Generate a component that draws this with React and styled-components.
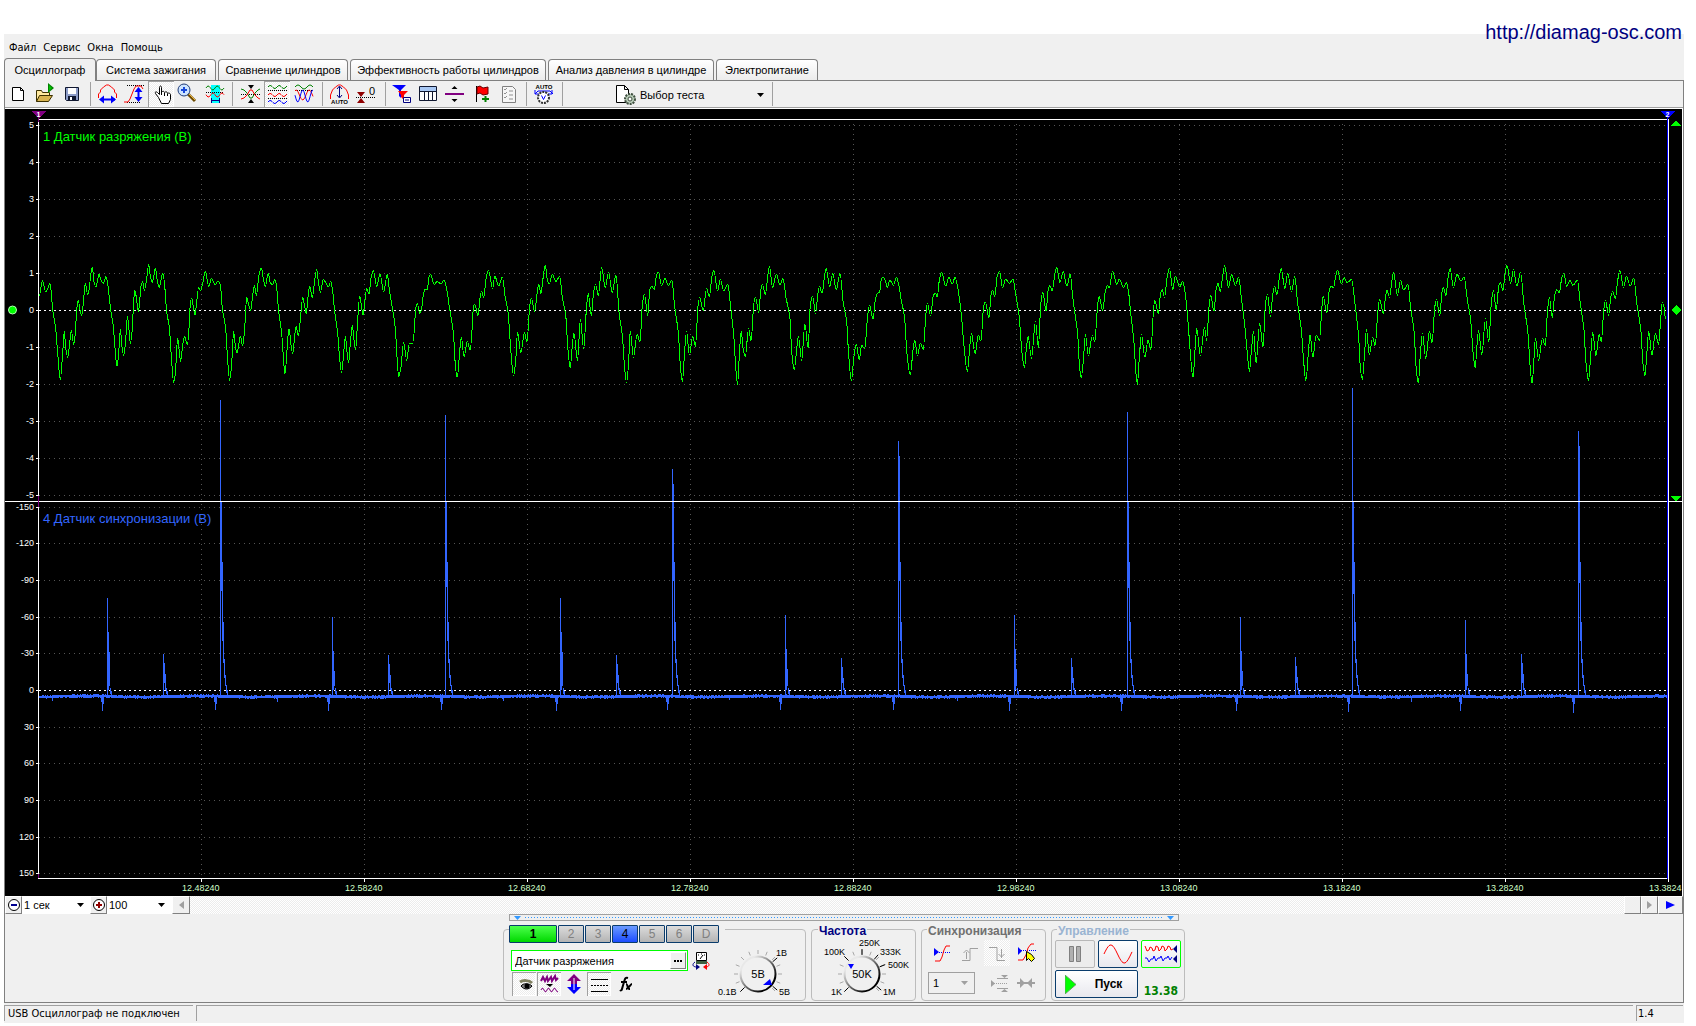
import React from "react";
import styled, { createGlobalStyle, css } from "styled-components";

const ui = '"Liberation Sans", Arial, sans-serif';
const tahoma = '"DejaVu Sans Condensed", "Noto Sans", sans-serif';
const face = "#f0f0f0";
const dither = "repeating-conic-gradient(#ffffff 0 25%, #ececec 0 50%) 0 0 / 2px 2px";

const GlobalStyle = createGlobalStyle`
  *, *::before, *::after { box-sizing: border-box; }
  body { margin: 0; background: #ffffff; font-family: ${ui}; font-size: 12px; color: #000; }
  button, input, select { font: inherit; color: inherit; margin: 0; padding: 0; border: 0; border-radius: 0; background: none; }
  svg { display: block; }
`;

/* ---------- frame ---------- */

const Page = styled.div`
  position: relative;
  padding: 34px 12px 5px 4px;
`;
const SiteLink = styled.a`
  position: absolute;
  top: 20px;
  right: 14px;
  font-size: 20px;
  line-height: 24px;
  color: #000080;
  text-decoration: none;
`;
const Window = styled.div`
  display: flex;
  flex-direction: column;
  background: ${face};
`;
const MenuBar = styled.nav`
  display: flex;
  height: 24px;
  padding: 4px 0 0 5px;
  gap: 7px;
  font-family: ${tahoma};
  font-size: 11px;
  line-height: 18px;
`;
const MenuItem = styled.button`
  line-height: 18px;
`;
const TabStrip = styled.div`
  display: flex;
  align-items: flex-end;
  gap: 2px;
  height: 23px;
  border-bottom: 1px solid #808080;
`;
const Tab = styled.button`
  height: ${(p) => (p.$active ? 23 : 21)}px;
  margin-bottom: ${(p) => (p.$active ? -1 : 0)}px;
  margin-right: ${(p) => (p.$active ? -2 : 0)}px;
  width: ${(p) => p.$w}px;
  border: 1px solid #808080;
  border-bottom: 0;
  border-radius: 4px 4px 0 0;
  background: ${(p) => (p.$active ? face : "linear-gradient(#ffffff, #ececec)")};
  font-size: 11px;
  line-height: 18px;
  white-space: nowrap;
`;
const Workspace = styled.main`
  display: flex;
  flex-direction: column;
  border: 1px solid #808080;
  border-top: 0;
`;

/* ---------- toolbar ---------- */

const Toolbar = styled.div`
  display: flex;
  height: 28px;
  padding: 0 1px;
  border-bottom: 1px solid #ffffff;
  box-shadow: inset 0 -1px 0 #a0a0a0;
`;
const ToolButton = styled.button`
  width: 26px;
  height: 26px;
  ${(p) =>
    p.$pressed &&
    css`
      background: ${dither};
      box-shadow: ${p.disabled ? "none" : "inset 1px 1px 0 #a0a0a0, inset -1px -1px 0 #ffffff"};
    `}
`;
const Separator = styled.span`
  width: ${(p) => p.$w}px;
  height: 24px;
  margin-top: 1px;
  background: linear-gradient(#a0a0a0, #a0a0a0) center / 1px 100% no-repeat;
`;
const TestPicker = styled.label`
  display: flex;
  align-items: center;
  width: 158px;
  margin-left: 47px;
`;
const SelectBox = styled.span`
  position: relative;
  display: flex;
  flex: ${(p) => (p.$w ? "none" : 1)};
  width: ${(p) => (p.$w ? p.$w + "px" : "auto")};
  height: ${(p) => p.$h}px;
  background: ${(p) => p.$bg || "transparent"};
  border: ${(p) => (p.$framed ? "1px solid #a0a0a0" : "0")};
  & > svg {
    position: absolute;
    right: ${(p) => p.$arrow}px;
    top: calc(50% - 2px);
    pointer-events: none;
  }
`;
const Select = styled.select`
  appearance: none;
  width: 100%;
  padding-left: ${(p) => p.$pad}px;
  font-size: 11px;
`;

/* ---------- chart ---------- */

const Scope = styled.div`
  background: #000;
  border-right: 1px solid #ffffff;
`;
const ScopeSvg = styled.svg`
  width: 100%;
  height: 787px;
  font-family: ${ui};
`;

/* ---------- scroll row ---------- */

const ScrollRow = styled.div`
  display: flex;
  height: 18px;
  background: ${dither};
`;
const FlatButton = styled.button`
  display: grid;
  place-items: center;
  width: ${(p) => p.$w}px;
  height: 18px;
  background: ${face};
  border: 1px solid;
  border-color: #ffffff #808080 #808080 #ffffff;
`;
const Spacer = styled.span`
  flex: 1;
`;

/* ---------- control panel ---------- */

const ControlPanel = styled.div`
  display: flex;
  flex-direction: column;
  align-items: center;
  padding-bottom: 1px;
`;
const Splitter = styled.div`
  display: flex;
  align-items: center;
  justify-content: space-between;
  width: 670px;
  height: 7px;
  padding: 0 4px;
  border: 1px solid #a0a0a0;
  &::before {
    content: "";
    order: 1;
    flex: 1;
    height: 1px;
    margin: 0 4px;
    background: repeating-linear-gradient(90deg, #3399ff 0 1px, transparent 1px 3px);
  }
  & > :last-child { order: 2; }
`;
const Groups = styled.div`
  display: flex;
  gap: 5px;
  margin-top: 8px;
`;
const Group = styled.section`
  display: flex;
  flex-direction: column;
  width: ${(p) => p.$w}px;
  height: 72px;
  padding: 0 ${(p) => p.$pad}px;
  border: 1px solid #bcbcbc;
  border-radius: 4px;
`;
const GroupTitle = styled.h2`
  align-self: flex-start;
  height: 16px;
  margin: -7px 0 0 ${(p) => p.$inset}px;
  padding: 0 1px;
  background: ${face};
  color: ${(p) => p.$color};
  font-size: 12px;
  font-weight: bold;
  line-height: 16px;
`;
const Channels = styled.div`
  display: flex;
  align-self: flex-start;
  gap: 1px;
  margin-top: -5px;
  padding-right: 6px;
  background: ${face};
`;
const tones = {
  green: "linear-gradient(#4cff4c, #00d800)",
  blue: "linear-gradient(#6a9aff, #1c4cff)",
  gray: "linear-gradient(#dcdcdc, #b4b4b4)",
};
const ChannelButton = styled.button`
  width: ${(p) => (p.$tone === "green" ? 48 : 26)}px;
  height: 18px;
  border: 1px solid #0a3c6c;
  border-radius: 1px;
  background: ${(p) => tones[p.$tone]};
  color: ${(p) => (p.$tone === "gray" ? "#808080" : "#000")};
  font-size: 12px;
  font-weight: ${(p) => (p.$tone === "green" ? "bold" : "normal")};
  line-height: 14px;
`;
const ProbeBody = styled.div`
  display: flex;
  justify-content: space-between;
  padding: 3px 0 0 2px;
`;
const ProbeLeft = styled.div`
  padding-top: 4px;
`;
const FieldRow = styled.div`
  display: flex;
  gap: 4px;
`;
const Field = styled.div`
  display: flex;
  width: 177px;
  height: 21px;
  padding: 1px;
  border: 1px solid #00ff00;
  background: #ffffff;
`;
const TextInput = styled.input`
  flex: 1;
  min-width: 0;
  padding-left: 2px;
  font-size: 11px;
`;
const MoreButton = styled(FlatButton)`
  height: 17px;
`;
const IconRow = styled.div`
  display: flex;
  gap: 1px;
  margin-top: 1px;
  padding-left: 1px;
`;
const SmallTool = styled(ToolButton)`
  width: 24px;
  height: 24px;
`;
const KnobBox = styled.label`
  position: relative;
  font-family: ${ui};
`;
const KnobInput = styled.input`
  position: absolute;
  inset: 0;
  width: 100%;
  height: 100%;
  opacity: 0;
`;
const SyncGrid = styled.div`
  display: grid;
  grid-template-columns: repeat(4, 26px);
  column-gap: 2px;
  row-gap: 4px;
  align-items: center;
  padding: 1px 0 0 4px;
  & > :nth-child(5) { grid-column: span 2; }
`;
const RunGrid = styled.div`
  display: grid;
  grid-template-columns: repeat(3, 40px);
  grid-auto-rows: 28px;
  gap: 2px 3px;
  padding-top: 1px;
`;
const PushButton = styled.button`
  display: flex;
  align-items: center;
  justify-content: center;
  gap: 19px;
  grid-column: span ${(p) => p.$span || 1};
  padding-right: ${(p) => (p.$span ? 6 : 0)}px;
  border: 1px solid ${(p) => p.$edge};
  border-radius: 2px;
  background: ${(p) => (p.disabled ? "#ececec" : "linear-gradient(#ffffff, #e8e8ee)")};
  font-size: 12px;
  font-weight: bold;
`;
const Clock = styled.output`
  align-self: end;
  padding: 0 3px 0 0;
  text-align: right;
  color: #008000;
  font-family: "DejaVu Sans Condensed", sans-serif;
  font-size: 12px;
  font-weight: bold;
  line-height: 14px;
`;

/* ---------- status bar ---------- */

const StatusBar = styled.footer`
  display: flex;
  gap: 3px;
  height: 18px;
  margin-top: 2px;
  padding-right: 1px;
  font-family: ${tahoma};
  font-size: 11px;
  line-height: 16px;
`;
const StatusCell = styled.div`
  flex: ${(p) => (p.$w ? "none" : 1)};
  width: ${(p) => (p.$w ? p.$w + "px" : "auto")};
  height: 16px;
  padding-left: ${(p) => p.$pad || 3}px;
  border-top: 1px solid #a0a0a0;
  border-left: 1px solid #a0a0a0;
  white-space: nowrap;
`;

/* ---------- drawings ---------- */

const wave = (x0, x1, y, amp, period, phase = 0) => {
  let d = "";
  for (let x = x0; x <= x1; x += 1) {
    const v = y - amp * Math.sin(((x - x0) / period) * Math.PI * 2 + phase);
    d += `${x === x0 ? "M" : "L"}${x} ${v.toFixed(1)}`;
  }
  return d;
};

const Pic = ({ w = 26, h = 26, children }) => (
  <svg width={w} height={h} viewBox={`0 0 ${w} ${h}`} fill="none" aria-hidden="true">{children}</svg>
);
const Arrow = ({ color = "#000" }) => (
  <svg width="7" height="4" viewBox="0 0 7 4" aria-hidden="true"><path d="M0 0h7L3.500 4z" fill={color} /></svg>
);
const dots = { stroke: "#000", strokeDasharray: "1 1", shapeRendering: "crispEdges" };

const icons = {
  file: <path d="M6.500 6.500h8l3 3v10h-11zM14.500 6.500v3h3" fill="#fff" stroke="#000" />,
  open: (
    <>
      <path d="M4.500 20.500v-11h5l1 2h7v3" fill="#ffe9a0" stroke="#3c3000" />
      <path d="M4.500 20.500l3-6h13l-4 6z" fill="#d8b450" stroke="#3c3000" />
      <path d="M16 2v10l6-5z" fill="#008000" /><path d="M17 4v6l3-3z" fill="#00c000" />
    </>
  ),
  save: (
    <>
      <path d="M7.500 6.500h13v13h-12l-1-1z" fill="#8c9cc8" stroke="#101830" />
      <path d="M10 7h8v6h-8z" fill="#fff" /><path d="M10 15h8v4h-8z" fill="#101830" /><path d="M12 16h2v3h-2z" fill="#fff" />
    </>
  ),
  width: (
    <>
      <path d="M2.500 17v-4l2-2v-2l3-3 3-2h2l3 2 3 3v2l2 2v4" stroke="#f00" />
      <path d="M5 18.500h14" stroke="#00f" strokeWidth="2" /><path d="M3 18.500l5-4v8zM20 18.500l-5-4v8z" fill="#00f" />
    </>
  ),
  height: (
    <>
      <path d="M5 4.500h17M5 21.500h14" {...dots} />
      <path d="M2 21h4l2-3 2-5 2-5 2-3h5l2 3" stroke="#f00" />
      <path d="M16.500 8v11" stroke="#00f" strokeWidth="2" /><path d="M16.500 6l-4 5h8zM16.500 21l-4-5h8z" fill="#00f" />
    </>
  ),
  hand: (
    <path d="M10.500 16.500l-3-4c-1-2 1-2 2-1l2 2v-7c0-2 2-2 2 0v5c1-2 3-1 3 0 1-1 3-1 3 1 1-1 3 0 3 1v5l-2 4h-7z M13.500 11v3M16.500 12v3M19.500 13v2" fill="#fff" stroke="#000" />
  ),
  zoom: (
    <>
      <path d="M13 12l8 8" stroke="#6c4a00" strokeWidth="3" /><path d="M14 12l7 7" stroke="#f0b840" />
      <circle cx="10" cy="9" r="6" fill="#cde4ff" stroke="#203c78" /><path d="M7 9h6M10 6v6" stroke="#1848d8" strokeWidth="2" />
    </>
  ),
  fit: (
    <>
      <path d="M11 4h9v18h-9z" fill="#0ff" />
      <path d={wave(6, 24, 7, 2, 9)} stroke="#008000" /><path d="M6 11.500h18" {...dots} />
      <path d={wave(6, 24, 14, 2, 9, 3)} stroke="#f00" />
      <path d="M12 19.500h7M11.500 17v5M19.500 17v5" stroke="#008" />
    </>
  ),
  cross: (
    <>
      <path d="M3 13.500h19" {...dots} />
      <path d="M3 8l3 1 3 3 3 5h2l3-5 3-3 2-1" stroke="#008000" />
      <path d="M3 18l3-1 3-3 3-5h2l3 5 3 3 2 1" stroke="#f00" />
      <path d="M10 4h6l-3 4zM10 22h6l-3-4z" fill="#000" />
    </>
  ),
  split: (
    <>
      <path d={wave(4, 23, 6, 1.500, 9)} stroke="#008000" /><path d="M4 9.500h19M4 17.500h19" {...dots} />
      <path d={wave(4, 23, 14, 1.500, 9)} stroke="#f00" /><path d={wave(4, 23, 21, 1.500, 9)} stroke="#00f" />
    </>
  ),
  overlay: (
    <>
      <path d={wave(5, 23, 6, 2, 12)} stroke="#008000" /><path d="M5 9.500h18" {...dots} />
      <path d={wave(5, 23, 14, 5, 13, 1)} stroke="#f00" /><path d={wave(5, 23, 15, 6, 10, 3)} stroke="#00f" />
    </>
  ),
  autoY: (
    <>
      <path d="M2.500 18v-4l2-5 3-3 3-2h2l3 2 3 3 2 5v4" stroke="#f00" />
      <path d="M11.500 6v10M9 8l2.500-3L14 8M9 14l2.500 3 2.500-3" stroke="#000080" />
      <text x="11.500" y="23" fontSize="6" fontWeight="bold" textAnchor="middle" fill="#000">AUTO</text>
    </>
  ),
  zero: (
    <>
      <path d="M2 16.500h19" {...dots} /><path d="M3 11h8l-4 5zM3 22h8l-4-5z" fill="#900000" />
      <text x="15" y="14" fontSize="11" fill="#000">0</text>
    </>
  ),
  filter: (
    <>
      <path d="M2 4h14l-5 5v8l-2-2v-6z" fill="#00f" /><path d="M8 10h10l-4 4v5l-3-3v-2z" fill="#f00" />
      <path d="M13.500 16.500h7v5h-7z" fill="#fff" stroke="#000080" /><path d="M15 19h4" stroke="#000080" />
    </>
  ),
  table: (
    <>
      <path d="M3.500 5.500h17v14h-17z" fill="#fff" stroke="#101830" /><path d="M4 6h16v4H4z" fill="#a8c8f4" />
      <path d="M3 10.500h18M8.500 10v9M12.500 10v9M16.500 10v9" stroke="#101830" />
    </>
  ),
  divider: <><path d="M3 13h19" stroke="#800080" strokeWidth="2" /><path d="M12.500 5l3 3h-6zM12.500 21l3-3h-6z" fill="#000" /></>,
  flag: (
    <>
      <path d="M8.500 5v16" stroke="#000" /><path d="M9 6l3-1 3 2 5-1v7l-5 1-3-2-3 1z" fill="#f00" stroke="#600" />
      <path d="M14 18h7M17.500 15v6" stroke="#008000" strokeWidth="2" />
    </>
  ),
  checklist: (
    <>
      <path d="M8.500 5.500h10l3 3v13h-13z" fill="#f6f6f6" stroke="#808080" />
      <path d="M10 8l1 1 2-2M10 12l1 1 2-2M10 16l1 1 2-2M15 10h4M15 14h4M15 18h4" stroke="#909090" />
    </>
  ),
  autoV: (
    <>
      <text x="12" y="8" fontSize="6" fontWeight="bold" textAnchor="middle" fill="#000">AUTO</text>
      <path d="M3 13l3-3h12l3 3M3 9v4h4M20 9v4h-4" stroke="#00f" />
      <circle cx="11.500" cy="16.500" r="5.500" fill="#fff" stroke="#303030" strokeWidth="2" strokeDasharray="2 1" />
      <path d="M9.500 14.500l2 4 2-4" stroke="#00f" />
    </>
  ),
};

const toolbar = [
  ["file", "Новый"], ["open", "Открыть"], ["save", "Сохранить"], 12,
  ["width", "Развёртка"], ["height", "Размах"], ["hand", "Перемещение", true], ["zoom", "Масштаб"], ["fit", "Фрагмент"], 12,
  ["cross", "Совместить"], ["split", "Разделить", true], ["overlay", "Наложить"], 12,
  ["autoY", "Автомасштаб"], ["zero", "Обнулить"], 10,
  ["filter", "Фильтр"], ["table", "Таблица"], ["divider", "Линейка"], ["flag", "Закладка"], ["checklist", "Список"], 12,
  ["autoV", "Автонастройка"], 8,
];

/* ---------- traces ---------- */

// Each record holds its start, its sampling ratio and "position,level" pairs.
const vacuum = [
  { start: 0, ratio: 3, data: "118,167 127,122 137,155 143,148 149,130 153,150 158,210 167,265 173,340 181,418 188,340 193,274 197,322 203,352 208,320 214,271 221,313 226,280 230,210 235,180 239,205 245,226 250,190 256,130 263,165 268,145 272,105 277,82 282,125 288,142 292,125 297,103 303,120 310,130 318,110 323,130 332,210 340,260 345,325 351,380 356,340 361,268 366,320 371,347 377,300 382,229 387,270 391,310 396,275 400,205 404,151 409,172 415,214 419,185 422,142 428,125 433,151 440,115 446,73 451,107 457,127 461,112 466,85 472,122 478,142 483,120 488,100 493,125 500,215 508,262 514,350 521,427 526,400 533,295 538,335 542,364 548,315 554,290 562,314 568,250 571,190 575,175 580,200 585,226 589,195 596,142 602,153 608,130 616,94 626,139 635,115 645,134 655,123 661,135 667,205 677,265 683,360 689,421 695,370 701,275 706,318 711,340 716,315 721,289 728,317 734,265 740,172 746,195 752,211 757,175 763,137 769,166 777,105 784,84 790,115 796,139 805,99 811,130 818,133 824,118 829,135 836,215 845,280 850,350 855,403 861,330 867,265 873,315 878,341 883,300 888,259 895,286 901,240 908,172 914,200 919,220 924,170 929,139 937,173 943,130 950,88 955,125 961,157 970,118 978,130 985,141 992,124 997,145 1004,215 1013,280 1019,355 1025,398 1031,340 1036,289 1041,335 1046,368 1051,310 1057,256 1062,300 1067,329 1073,240 1079,169 1084,195 1089,227 1094,190 1100,145 1107,163 1113,115 1120,91 1130,139 1140,103 1151,155 1162,103 1168,150 1178,210 1186,265 1191,350 1196,410 1203,380 1211,307 1220,361 1228,310 1238,310 1243,270 1247,205 1252,190 1259,220" },
  { start: 420, ratio: 2.45, data: "4,205 8,165 12,149 18,148 22,112 26,102 35,134 42,124 51,132 59,120 65,145 73,210 82,280 86,365 91,413 97,340 101,291 108,350 116,303 123,330 128,260 131,200 134,192 142,227 147,175 151,153 156,173 162,115 168,91 178,146 183,108 193,137 202,111 208,165 216,220 223,340 229,407 234,370 239,276 247,338 256,277 262,306 269,195 273,174 281,215 287,160 291,133 296,161 302,110 307,76 312,120 317,131 324,103 333,125 342,109 349,175 357,225 362,320 368,383 373,320 377,279 386,361 393,238 401,327 407,220 412,160 420,227 425,160 430,133 437,166 445,82 454,143 462,97 471,158 480,106 488,220 496,290 501,380 506,428 511,370 515,273 523,352 532,283 539,307 545,190 550,163 558,227 563,150 568,139 574,148 579,108 584,96 592,137 600,115 609,137 617,121 624,200 633,280 638,380 643,425 648,340 653,274 660,345 668,290 675,318 681,200 685,172 694,212 702,145 709,170 715,110 720,91 729,153 736,118 744,153 754,132 761,200 769,290 774,390 778,433 783,330 787,273 792,330 797,350 805,265 811,303 818,190 822,172 830,219 835,150 839,133 846,164 851,120 856,79 864,143 873,103 882,134 889,115 897,175 906,230 911,340 917,389 922,340 927,288 935,362 943,252 951,325 956,200 962,168 969,221 975,160 979,139 985,160 991,110 995,85 1004,140 1011,100 1020,149 1029,100 1037,190 1045,240 1050,340 1057,422 1063,350 1069,312 1076,359 1082,316 1090,327 1095,250 1101,195 1110,237 1116,175 1121,160 1126,157 1130,120 1134,112 1140,121 1145,142 1151,120 1160,136 1167,112 1174,140 1179,180 1187,230 1193,340 1201,404 1208,330 1212,300 1219,347 1226,310 1233,328 1239,230 1243,190 1251,227 1258,165 1263,160 1267,172 1273,115 1278,97 1288,138 1296,112 1304,132 1311,112 1317,140 1326,220 1333,320 1341,395 1347,320 1351,280 1360,341 1368,285 1374,304 1381,200 1385,186 1394,233 1399,165 1403,151 1408,170 1414,110 1420,94 1427,142 1435,118 1444,130 1453,118 1459,160 1468,230 1475,340 1481,383 1486,320 1490,289 1498,355 1508,244 1515,323 1521,190 1526,157 1534,215 1539,150 1543,136 1549,153 1555,105 1560,82 1566,120" },
  { start: 1050, ratio: 2.427, data: "24,128 32,94 41,139 49,102 55,170 60,215 67,280 72,385 76,413 81,360 86,283 93,347 103,287 109,305 114,220 119,169 128,212 134,155 140,137 144,143 152,94 162,133 168,118 179,143 185,128 190,150 196,220 204,310 208,390 212,433 217,350 222,283 230,352 238,301 245,328 251,215 254,181 263,220 268,165 272,149 278,172 284,115 290,85 298,149 304,109 315,140 322,124 327,150 334,230 340,330 347,413 352,330 356,265 365,347 375,262 380,301 386,200 390,166 398,214 403,150 408,130 413,155 419,110 424,76 433,142 441,103 450,136 458,112 465,180 473,260 479,340 484,395 489,330 494,273 500,370 509,250 517,323 523,190 528,163 535,230 541,160 545,139 551,164 557,110 561,85 570,146 577,100 586,155 594,109 601,190 610,270 616,370 621,422 627,340 631,283 638,352 646,286 654,301 660,200 663,169 672,220 678,150 682,139 688,142 694,105 698,91 707,131 714,113 721,128 732,118 740,190 749,290 753,380 758,419 763,350 768,268 775,344 783,292 789,317 796,210 800,178 809,220 815,165 818,151 824,172 830,120 834,97 843,167 851,121 858,150 869,133 875,200 884,280 889,390 894,429 899,340 904,280 912,356 921,273 927,310 934,200 938,178 946,227 951,160 954,142 961,166 966,115 971,85 979,143 988,103 997,123 1005,112 1013,180 1021,240 1027,340 1032,383 1036,320 1040,271 1048,344 1057,235 1065,307 1071,190 1076,151 1083,209 1089,140 1093,127 1099,152 1104,105 1109,76 1118,130 1125,88 1133,139 1142,97 1150,190 1160,280 1166,390 1170,431 1174,370 1178,295 1186,361 1195,295 1202,317 1207,220 1212,172 1219,233 1225,165 1230,149 1236,158 1242,115 1247,100 1254,139 1262,121 1269,136 1280,121 1287,190 1296,270 1301,370 1307,422 1312,350 1317,277 1325,347 1333,283 1338,304 1344,210 1348,181 1356,226 1361,170 1366,154 1372,176 1378,120 1383,91 1392,143 1399,109 1408,137 1417,115 1424,190 1434,270 1439,370 1444,407 1448,350 1453,274 1461,346 1469,280 1477,313 1482,240 1486,187 1490,200 1494,237" },
];
const vacuumPoints = vacuum.flatMap((r) =>
  r.data.split(" ").map((pair) => {
    const [x, y] = pair.split(",").map(Number);
    return [r.start + x / r.ratio, 240 + y / 3];
  })
);
// Monotone interpolation: turning points get a level tangent.
const vacuumPath = (() => {
  const p = vacuumPoints;
  const slope = p.map((_, i) => {
    if (i === 0 || i === p.length - 1) return 0;
    const a = (p[i][1] - p[i - 1][1]) / (p[i][0] - p[i - 1][0]);
    const b = (p[i + 1][1] - p[i][1]) / (p[i + 1][0] - p[i][0]);
    return a * b <= 0 ? 0 : (2 * a * b) / (a + b);
  });
  let d = `M${p[0][0]} ${p[0][1]}`;
  for (let i = 1; i < p.length; i += 1) {
    const h = (p[i][0] - p[i - 1][0]) / 3;
    const c = [p[i - 1][0] + h, p[i - 1][1] + slope[i - 1] * h, p[i][0] - h, p[i][1] - slope[i] * h, p[i][0], p[i][1]];
    d += "C" + c.map((n) => n.toFixed(2)).join(" ");
  }
  return d;
})();

const pulses = [
  [107, 598], [163, 654], [220, 400], [332, 617], [388, 655], [445, 415], [560, 598], [616, 655], [672, 469],
  [785, 615], [841, 658], [898, 441], [1014, 615], [1071, 658], [1127, 412], [1240, 617], [1295, 657],
  [1352, 388], [1465, 620], [1521, 654], [1578, 431],
];
const dips = [
  [52, 701], [102, 711], [215, 710], [277, 702], [328, 711], [441, 710], [503, 701], [556, 711], [667, 710], [729, 700], [780, 710],
  [893, 710], [957, 701], [1009, 711], [1121, 711], [1236, 711], [1348, 712], [1411, 702], [1460, 711], [1573, 713],
];
const noise = (x) => Math.abs(Math.sin(x * 12.9898) * 43758.5453) % 1;
const baseline = (() => {
  let d = "";
  for (let x = 39; x < 1667; x += 1) {
    const c = 696.5 + Math.sin(x / 18) * 0.5;
    const top = Math.round(c - 1 - noise(x) * 0.9);
    const bottom = Math.round(c + 1 + noise(x + 0.5) * 0.9);
    d += `M${x + 0.5} ${top}V${bottom}`;
  }
  return d;
})();
const pulsePath = pulses
  .map(([x, top]) => {
    const h = 697 - top;
    if (h < 60) return `M${x + 0.5} ${top}V697M${x + 1.5} ${top + 9}V683M${x + 2.5} ${top + 20}V690M${x + 3.5} 688V694M${x + 4.5} 691V697`;
    if (h < 120) return `M${x + 0.5} ${top}V697M${x + 1.5} ${top + 34}V690M${x + 2.5} ${top + 54}V686M${x + 3.5} 688V694M${x + 4.5} 691V696`;
    const second = top < 430 ? 502 : top + 15;
    return `M${x + 0.5} ${top}V697M${x + 1.5} ${second}V${581 + Math.max(0, 10 - (top - 400) / 4)}M${x + 2.5} 562V641M${x + 3.5} 622V663M${x + 4.5} 659V678M${x + 5.5} 675V686M${x + 6.5} 685V693M${x + 7.5} 690V696`;
  })
  .join("");
const dipPath = dips.map(([x, y]) => `M${x + 0.5} 696V${y}` + (y > 705 ? `M${x - 0.5} 696V702M${x + 1.5} 696V704` : "")).join("");

const voltRows = [5, 4, 3, 2, 1, 0, -1, -2, -3, -4, -5].map((v) => [v, 310 - v * 37]);
const syncRows = [-150, -120, -90, -60, -30, 0, 30, 60, 90, 120, 150].map((v) => [v, Math.round(690 + v * 1.222)]);
const times = Array.from({ length: 10 }, (_, i) => [(12.4824 + i * 0.1).toFixed(5), 201 + i * 163]);

function Chart() {
  return (
    <Scope>
      <ScopeSvg viewBox="5 109 1677 787" preserveAspectRatio="none" role="img" aria-label="Осциллограмма" fill="none">
        <g shapeRendering="crispEdges">
          {[...voltRows, ...syncRows].map(([v, y]) => (
            <React.Fragment key={y}>
              <path d={`M39 ${y + 0.5}H1667`} stroke={v === 0 ? "#fff" : "#555"} strokeDasharray={v === 0 ? "2 3" : "1 4"} />
              <path d={`M36 ${y + 0.5}h3`} stroke="#fff" />
            </React.Fragment>
          ))}
          {times.slice(0, 9).map(([t, x]) => (
            <path key={t} d={`M${x + 0.5} 124V878`} stroke="#555" strokeDasharray="1 4" />
          ))}
          {times.map(([t, x]) => <path key={t} d={`M${x + 0.5} 879v3`} stroke="#fff" />)}
        </g>
        {[...voltRows, ...syncRows].map(([v, y]) => (
          <text key={y} x="34" y={y + 3} fontSize="9" textAnchor="end" fill="#fff">{v}</text>
        ))}
        {times.map(([t, x], i) => (
          <text key={t} x={x - 19} y="891" fontSize="9" fill="#d0ffc8">{i === 9 ? t.slice(0, 7) : t}</text>
        ))}
        <g shapeRendering="crispEdges">
          <path d={vacuumPath} stroke="#00ff00" />
          <path d={baseline + pulsePath + dipPath} stroke="#3366ff" />
          <path d="M38 119.500H1669M5 501.500H1682M38 878.500H1669M38.500 119V879M1668.500 119V879" stroke="#fff" />
          <path d="M1667.500 117V879" stroke="#0000ff" />
          <path d="M38.500 117v5M38.500 496v11M38.500 874v4" stroke="#800080" />
          <path d="M31 111h15l-7 8z" fill="#800080" /><path d="M1660 111h15l-7 8z" fill="#0000ff" />
          <path d="M1676 120l5 6h-10zM1676 502l5-6h-10zM1676 305l5 5-5 5-5-5z" fill="#00ff00" />
        </g>
        <circle cx="12.500" cy="310" r="4" fill="#00ff00" stroke="#b0ffb0" />
        <text x="38.500" y="117" fontSize="7" fontWeight="bold" textAnchor="middle" fill="#fff">1</text>
        <text x="1667.500" y="117" fontSize="7" fontWeight="bold" textAnchor="middle" fill="#fff">2</text>
        <text x="43" y="141" fontSize="13" fill="#00ff00">1 Датчик разряжения (В)</text>
        <text x="43" y="523" fontSize="13" fill="#3366ff">4 Датчик синхронизации (В)</text>
      </ScopeSvg>
    </Scope>
  );
}

function Knob({ box, value, labels, marks, pointer, name, id }) {
  const [, , w, h] = box;
  const ticks = Array.from({ length: 13 }, (_, i) => 225 - i * 22.5);
  const at = (deg, r) => `${(Math.cos((deg * Math.PI) / 180) * r).toFixed(1)} ${(-Math.sin((deg * Math.PI) / 180) * r).toFixed(1)}`;
  return (
    <KnobBox htmlFor={id} aria-label={name}>
      <svg width={w} height={h} viewBox={box.join(" ")} fill="none" aria-hidden="true">
        <defs>
          <linearGradient id={id + "ring"} x1="0" y1="0" x2="1" y2="1">
            <stop offset="0.200" stopColor="#e8e8e8" /><stop offset="0.800" stopColor="#000" />
          </linearGradient>
        </defs>
        {ticks.map((a) => <path key={a} d={`M${at(a, 20)}L${at(a, 24)}`} stroke="#a8a8a8" />)}
        {marks.map((a) => <path key={a} d={`M${at(a, 19)}L${at(a, 25)}`} stroke="#000" />)}
        <circle r="17.500" fill={face} stroke={`url(#${id}ring)`} strokeWidth="2" />
        <path d={pointer} fill="#00f" />
        <text y="4" fontSize="11" textAnchor="middle" fill="#000">{value}</text>
        {labels.map(([t, lx, ly]) => <text key={t} x={lx} y={ly} fontSize="9" fill="#000">{t}</text>)}
      </svg>
      <KnobInput id={id} type="range" />
    </KnobBox>
  );
}

function DropDown({ label, value, pad = 3, ...box }) {
  return (
    <SelectBox {...box}>
      <Select aria-label={label} defaultValue={value} $pad={pad}><option>{value}</option></Select>
      <Arrow color={box.$framed ? "#a0a0a0" : "#000"} />
    </SelectBox>
  );
}

const Zoomer = ({ plus }) => (
  <Pic w={14} h={14}>
    <circle cx="7" cy="7" r="5.500" fill="#fff" stroke="#000" />
    <path d={plus ? "M4 7h6M7 4v6" : "M4 7h6"} stroke={plus ? "#900000" : "#000090"} strokeWidth="2" />
  </Pic>
);

const tabs = [
  ["Осциллограф", 92], ["Система зажигания", 120], ["Сравнение цилиндров", 130],
  ["Эффективность работы цилиндров", 196], ["Анализ давления в цилиндре", 166], ["Электропитание", 102],
];

export default function App() {
  return (
    <>
      <GlobalStyle />
      <Page>
        <Window>
          <MenuBar>
            {["Файл", "Сервис", "Окна", "Помощь"].map((m) => <MenuItem key={m}>{m}</MenuItem>)}
          </MenuBar>
          <TabStrip role="tablist">
            {tabs.map(([t, w], i) => (
              <Tab key={t} role="tab" aria-selected={i === 0} $active={i === 0} $w={w}>{t}</Tab>
            ))}
          </TabStrip>
          <Workspace>
            <Toolbar role="toolbar">
              {toolbar.map((item, i) =>
                typeof item === "number" ? (
                  <Separator key={i} $w={item} />
                ) : (
                  <ToolButton key={i} aria-label={item[1]} $pressed={item[2]}><Pic>{icons[item[0]]}</Pic></ToolButton>
                )
              )}
              <TestPicker>
                <Pic w={24} h={24}>
                  <path d="M3.500 2.500h8l4 4v13h-12zM11.500 2.500v4h4" fill="#fff" stroke="#000" />
                  <circle cx="17" cy="16" r="5" fill="#b8ccb8" stroke="#405040" strokeWidth="2" strokeDasharray="2 1" />
                  <circle cx="17" cy="16" r="2" fill="#fff" stroke="#405040" />
                </Pic>
                <DropDown label="Выбор теста" value="Выбор теста" pad={3} $h={20} $arrow={7} />
              </TestPicker>
              <Separator $w={2} />
            </Toolbar>
            <Chart />
            <ScrollRow>
              <FlatButton $w={17} aria-label="Уменьшить"><Zoomer /></FlatButton>
              <DropDown label="Длительность" value="1 сек" pad={2} $w={68} $h={18} $arrow={6} $bg="#fff" />
              <FlatButton $w={17} aria-label="Увеличить"><Zoomer plus /></FlatButton>
              <DropDown label="Масштаб, %" value="100" pad={2} $w={65} $h={18} $arrow={7} $bg="#fff" />
              <FlatButton $w={18} aria-label="Назад"><Pic w={5} h={8}><path d="M5 0v8L0 4z" fill="#a0a0a0" /></Pic></FlatButton>
              <Spacer />
              <FlatButton $w={17} aria-label="Ползунок" />
              <FlatButton $w={17} aria-label="Вперёд"><Pic w={5} h={8}><path d="M0 0v8l5-4z" fill="#a0a0a0" /></Pic></FlatButton>
              <FlatButton $w={25} aria-label="В конец"><Pic w={9} h={8}><path d="M0 0v8l9-4z" fill="#0000ff" /></Pic></FlatButton>
            </ScrollRow>
            <ControlPanel>
              <Splitter><Arrow color="#3399ff" /><Arrow color="#3399ff" /></Splitter>
              <Groups>
                <Group $w={303} $pad={5} aria-label="Канал">
                  <Channels>
                    {["1", "2", "3", "4", "5", "6", "D"].map((c) => (
                      <ChannelButton key={c} $tone={c === "1" ? "green" : c === "4" ? "blue" : "gray"}>{c}</ChannelButton>
                    ))}
                  </Channels>
                  <ProbeBody>
                    <ProbeLeft>
                      <FieldRow>
                        <Field>
                          <TextInput aria-label="Датчик" defaultValue="Датчик разряжения" />
                          <MoreButton $w={16} aria-label="Выбрать датчик">
                            <Pic w={8} h={2}><path d="M0 0h2v2H0zM3 0h2v2H3zM6 0h2v2H6z" fill="#000" /></Pic>
                          </MoreButton>
                        </Field>
                        <Pic w={18} h={21}>
                          <path d="M4.500 2.500h10v8h-10z" fill="#fff" stroke="#000" /><path d="M4 11h11v3H4z" fill="#406040" />
                          <path d="M8 9l3-4M6 5h1M9 4h1M12 5h1" stroke="#000" />
                          <path d="M3 12c-3 2-3 5 2 5" stroke="#000080" /><path d="M4 14v6l4-3z" fill="#000080" />
                          <path d="M15 12c3 2 3 5-2 5" stroke="#f00" /><path d="M15 14v6l-4-3z" fill="#f00" />
                        </Pic>
                      </FieldRow>
                      <IconRow>
                        <SmallTool $pressed aria-label="Показать">
                          <Pic w={24} h={24}>
                            <path d="M8 10c3-2 9-2 12 1" stroke="#808060" strokeWidth="3" />
                            <path d="M9 14c2-3 8-3 11 0-3 4-8 4-11 0z" fill="#808080" stroke="#000" />
                            <circle cx="15" cy="14" r="2.500" fill="#000" />
                          </Pic>
                        </SmallTool>
                        <SmallTool $pressed aria-label="Сглаживание">
                          <Pic w={24} h={24}>
                            <path d="M4 9l2-4 2 4 2-4 1 4 3-4 1 4 3-5 1 4 2-2" stroke="#800080" strokeWidth="2" />
                            <path d="M9 12h7l-3 3z" fill="#000" /><path d={wave(4, 21, 18, 2, 6)} stroke="#800080" />
                          </Pic>
                        </SmallTool>
                        <SmallTool aria-label="Сдвиг">
                          <Pic w={24} h={24}>
                            <path d="M12 2l7 7h-4v3H9V9H5z" fill="#800080" /><path d="M12 22l7-7h-4v-3H9v3H5z" fill="#00f" />
                            <path d="M12 6v12" stroke="#fff" />
                          </Pic>
                        </SmallTool>
                        <SmallTool $pressed aria-label="Сетка">
                          <Pic w={24} h={24}>
                            <path d="M4 7.500h17M4 19.500h17" stroke="#000" /><path d="M4 13.500h17" stroke="#000" strokeDasharray="2 1" />
                          </Pic>
                        </SmallTool>
                        <SmallTool aria-label="Функция">
                          <Pic w={24} h={24}>
                            <path d="M16 6c-3-1-3 1-4 4l-2 7c0 1-1 2-2 1M9 10h6" stroke="#000" strokeWidth="2" />
                            <path d="M14 12c2 0 1 5 4 5M20 12c-2 0-3 5-6 5" stroke="#000" strokeWidth="2" />
                          </Pic>
                        </SmallTool>
                      </IconRow>
                    </ProbeLeft>
                    <Knob id="range" name="Диапазон" box={[-42, -28, 84, 52]} value="5В" pointer="M12 5l2 6-9 0z" marks={[225, 40, -40]}
                      labels={[["0.1В", -40, 21], ["1В", 18, -18], ["5В", 21, 21]]} />
                  </ProbeBody>
                </Group>
                <Group $w={105} $pad={1} aria-label="Частота">
                  <GroupTitle $color="#000080" $inset={5}>Частота</GroupTitle>
                  <Knob id="rate" name="Частота" box={[-49, -35, 101, 60]} value="50K" pointer="M-14-10h6l-3 5z" marks={[225, 135, 90, 50, 22, -40]}
                    labels={[["1K", -31, 21], ["100K", -38, -19], ["250K", -3, -28], ["333K", 18, -19], ["500K", 26, -6], ["1M", 21, 21]]} />
                </Group>
                <Group $w={125} $pad={2} aria-label="Синхронизация">
                  <GroupTitle $color="#707070" $inset={3}>Синхронизация</GroupTitle>
                  <SyncGrid>
                    <ToolButton aria-label="Уровень">
                      <Pic><path d="M7 12.500h16" stroke="#00f" strokeDasharray="1 1" /><path d="M7 21h5l2-4 2-7 2-4h4" stroke="#f00" /><path d="M6 8v8l5-4z" fill="#00f" /></Pic>
                    </ToolButton>
                    <ToolButton disabled aria-label="Фронт"><Pic><path d="M6 20.500h8v-12h8M10.500 19v-7M7.500 13l3-3 3 3" stroke="#a0a0a0" /></Pic></ToolButton>
                    <ToolButton $pressed disabled aria-label="Спад"><Pic><path d="M5 7.500h8v13h8M17.500 9v9M14.500 14l3 3 3-3" stroke="#a0a0a0" /></Pic></ToolButton>
                    <ToolButton aria-label="Настройка">
                      <Pic><path d="M7 10.500h18" stroke="#00f" strokeDasharray="1 1" /><path d="M6 20h5l3-5 2-7 3-4h3" stroke="#f00" /><path d="M6 7v8l4-4z" fill="#00f" /><path d="M14.500 11.500v9l2-2 3 3 3-3-3-4z" fill="#ff0" stroke="#000" /></Pic>
                    </ToolButton>
                    <DropDown label="Канал синхронизации" value="1" pad={4} $w={47} $h={22} $arrow={6} $framed />
                    <Pic><path d="M8 13.500h16" stroke="#a0a0a0" strokeDasharray="1 1" /><path d="M13 8.500h11M13 18.500h11" stroke="#a0a0a0" /><path d="M7 10v7l4-3.500zM17 5h7l-3.500 3zM17 22h7l-3.500-3z" fill="#a0a0a0" /></Pic>
                    <Pic><path d="M5 13h18" stroke="#a0a0a0" strokeWidth="2" /><path d="M8 8v10l5-5zM20 8v10l-5-5z" fill="#a0a0a0" /></Pic>
                  </SyncGrid>
                </Group>
                <Group $w={134} $pad={3} aria-label="Управление">
                  <GroupTitle $color="#9ab4d2" $inset={2}>Управление</GroupTitle>
                  <RunGrid>
                    <PushButton disabled $edge="#b8b8b8" aria-label="Пауза">
                      <Pic w={12} h={16}><path d="M.5.500h4v15h-4zM7.500.500h4v15h-4z" fill="#b0b0b0" stroke="#808080" /></Pic>
                    </PushButton>
                    <PushButton $edge="#0a3c6c" aria-label="Один кадр">
                      <Pic w={30} h={22}><path d={wave(1, 29, 11, 9, 27)} stroke="#f00" /></Pic>
                    </PushButton>
                    <PushButton $edge="#00ff00" aria-label="Непрерывно">
                      <Pic w={34} h={22}>
                        <path d="M1 3l2 5 2-1 1-3 2 1 1 3 2-1 1-4 2 1 1 4 2-2 1-3 2 1 1 4 2-2 1-3 2 1 1 3 2-1" stroke="#f00" />
                        <path d="M1 15h2l2 4 2-3h2l1-3 2 5 2-3h2l1-2 2 5 2-3h2l1-2 2 4 2-3" stroke="#00f" />
                        <path d="M33 2v8l-4-4zM33 12v8l-4-4z" fill="#000080" />
                      </Pic>
                    </PushButton>
                    <PushButton $edge="#0a3c6c" $span={2}>
                      <Pic w={11} h={19}><path d="M0 0l11 9.500L0 19z" fill="#00ff00" stroke="#60a060" /></Pic>
                      <span>Пуск</span>
                    </PushButton>
                    <Clock>13.38</Clock>
                  </RunGrid>
                </Group>
              </Groups>
            </ControlPanel>
          </Workspace>
          <StatusBar>
            <StatusCell $w={189}>USB Осциллограф не подключен</StatusCell>
            <StatusCell />
            <StatusCell $w={47} $pad={1}>1.4</StatusCell>
          </StatusBar>
        </Window>
        <SiteLink href="http://diamag-osc.com">http://diamag-osc.com</SiteLink>
      </Page>
    </>
  );
}
